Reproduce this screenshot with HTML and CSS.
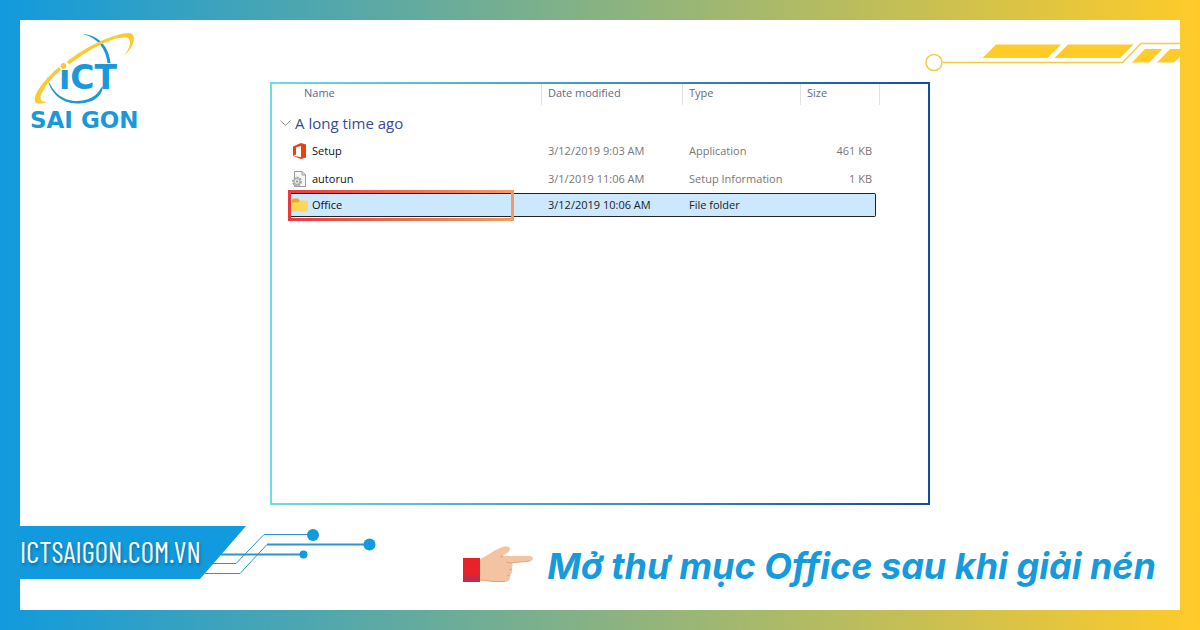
FILE: index.html
```html
<!DOCTYPE html>
<html lang="vi">
<head>
<meta charset="utf-8">
<meta name="viewport" content="width=device-width, initial-scale=1">
<title>ICT Sai Gon</title>
<link rel="stylesheet" href="styles.css">
</head>
<body>
<div class="frame">
  <div class="page">
    <svg class="logo" viewBox="28 30 116 102" role="img" aria-label="ICT Sai Gon">
      <path class="logo-blue" d="M83 34C99 35 109 47 110.500 63L107.500 63C106 49 98 38 83 34Z"/>
      <path class="logo-blue" d="M47 76C49 92 61 103.500 77 103.500C91 103.500 102 98 103 86L101 88C97 96 88 101 77 101C62 101 51 91 47 76Z"/>
      <path class="logo-gold" d="M67 61.500C88 45 116 33 129 33C138 34 134 47 124 56C130 48 133 39 126 37.500C113 36 88 50 69 64.500Z"/>
      <path class="logo-gold" d="M59 67C45 79 33 94 35 101C36 105 42 104 47 102C41 102 38 99 43 91C47 83 53 77 61 70Z"/>
      <text class="logo-ict" x="59" y="89">ıCT</text>
      <circle class="logo-gold" cx="63.500" cy="66" r="3.500" stroke="#fff"/>
      <text class="logo-city" x="30" y="128">SAI GON</text>
    </svg>

    <svg class="trace" viewBox="920 40 260 32" aria-hidden="true">
      <path class="trace-line" d="M943 62.500H1122.500L1141 43.500H1180"/>
      <circle class="trace-line" cx="934" cy="62.500" r="8"/>
      <path class="trace-fill" d="M982.500 58L996 44.500H1061L1047.500 58ZM1054.500 58L1068 44.500H1133.500L1120 58ZM1132 62.500L1145 49H1162.500L1149 62.500ZM1157 62.500L1170 49H1180V57L1174 62.500Z"/>
    </svg>

    <main class="window">
      <table class="files">
        <colgroup><col><col class="col-date"><col class="col-type"><col class="col-size"></colgroup>
        <thead>
          <tr><th class="name-head">Name</th><th>Date modified</th><th>Type</th><th class="size-head">Size</th></tr>
        </thead>
        <tbody>
          <tr class="group">
            <th colspan="4" scope="rowgroup">
              <div class="group-label">
                <svg class="chevron" viewBox="0 0 11 8" aria-hidden="true"><path d="M.5 1.500L5.500 6.500L10.500 1.500"/></svg>
                A long time ago
              </div>
            </th>
          </tr>
          <tr class="row">
            <td><div class="file">
              <svg class="icon" viewBox="0 0 16 16" aria-hidden="true"><path fill="#e8420c" fill-rule="evenodd" d="M1 3.500L9 0L14 1.500V14.500L9 16L1 13L9 14V3L4 4.200V11.500L1 13Z"/></svg>
              Setup</div></td>
            <td>3/12/2019 9:03 AM</td><td>Application</td><td class="size">461 KB</td>
          </tr>
          <tr class="row">
            <td><div class="file">
              <svg class="icon" viewBox="0 0 16 16" aria-hidden="true"><path fill="#f7f7f7" stroke="#999" d="M2.500 .5H10L13.500 4V15.500H2.500Z"/><path fill="none" stroke="#999" d="M10 .5V4H13.500"/><circle cx="5" cy="10.500" r="4" fill="#ddd" stroke="#a4a8ac" stroke-width="2" stroke-dasharray="2 1"/><circle cx="5" cy="10.500" r="3" fill="#e5e5e5" stroke="#a4a8ac"/><circle cx="5" cy="10.500" r="1" fill="#8a8f94"/></svg>
              autorun</div></td>
            <td>3/1/2019 11:06 AM</td><td>Setup Information</td><td class="size">1 KB</td>
          </tr>
          <tr class="row selected">
            <td class="marked"><div class="file">
              <svg class="icon" viewBox="0 0 16 16" aria-hidden="true"><path fill="#e8ac17" d="M0 3Q0 1.500 1.500 1.500H6L8 3.500V7H0Z"/><path fill="#ffd659" d="M0 5.500H6L8 3.500H14.500Q16 3.500 16 5V13Q16 14.500 14.500 14.500H1.500Q0 14.500 0 13Z"/></svg>
              Office</div></td>
            <td>3/12/2019 10:06 AM</td><td>File folder</td><td class="size"></td>
          </tr>
        </tbody>
      </table>
    </main>

    <footer class="footer">
      <div class="brand">
        <a class="site" href="#">ICTSAIGON.COM.VN</a>
        <svg class="circuit" viewBox="200 526 180 53" aria-hidden="true">
          <path class="wire" d="M213 563.500H236L264 534.500H308M205 573.500H240L267 544.500"/>
          <path class="wire-bold" d="M267 544.500H364M221 554.500H301"/>
          <circle cx="313" cy="535" r="6"/><circle cx="369.500" cy="544.500" r="6"/><circle cx="303.500" cy="554.500" r="4"/>
        </svg>
      </div>
      <div class="caption">
        <svg class="hand" viewBox="463 546 70 36" aria-hidden="true">
          <path fill="#f4c4a2" d="M480 559C489 555 494 550 500 548C505 546 510 546 510 549C510 552 506 553 503 556H529C534 556 534 561 530 561L512 563C513 566 512 567 512 569C513 572 511 574 510 575C511 580 508 582 505 582H495C490 582 486 580 480 580Z"/>
          <path fill="none" stroke="#dda47e" stroke-width="1" d="M530 561L510 563L506 562M512 569L509 570M510 575L507 576M503 556L500 557M480 580C486 580 490 581.500 495 581.500H505"/>
          <path fill="#e9212b" d="M463 558H480V575H463Z"/><path fill="#c62a45" d="M463 575H480V582H463Z"/>
        </svg>
        <h1 class="title">Mở thư mục Office sau khi giải nén</h1>
      </div>
    </footer>
  </div>
</div>
</body>
</html>
```
FILE: styles.css
```css
* { box-sizing: border-box; }

body {
  margin: 0;
  font-family: "Open Sans", "Noto Sans", sans-serif;
}

.frame {
  display: grid;
  min-height: 100vh;
  padding: 20px;
  background: linear-gradient(90deg, #119add, #ffcb29);
}

.page {
  display: grid;
  grid-template-columns: minmax(0, 25fr) minmax(0, 66fr) minmax(0, 25fr);
  grid-template-rows: 62px 1fr auto;
  background: #fff;
}

.logo {
  grid-column: 1;
  grid-row: 1 / 3;
  width: 116px;
  height: 102px;
  margin: 10px 0 0 8px;
}
.logo-blue { fill: #1b98d8; }
.logo-gold { fill: #fbc932; }
.logo-ict, .logo-city {
  fill: #1b98d8;
  font-family: "DejaVu Sans", sans-serif;
  font-weight: bold;
}
.logo-ict { font-size: 33px; }
.logo-city { font-size: 23px; }

.trace {
  grid-column: 2 / 4;
  grid-row: 1;
  justify-self: end;
  width: 260px;
  height: 32px;
  margin-top: 20px;
}
.trace-line { fill: none; stroke: #f5ca45; stroke-width: 1.5; }
.trace-fill { fill: #ffcb29; }

.window {
  grid-column: 2;
  grid-row: 2;
  padding: 0 52px 0 16px;
  border: 2px solid;
  border-image: linear-gradient(90deg, #6edde3, #134d9f) 1;
}

.files {
  width: 100%;
  table-layout: fixed;
  border-collapse: separate;
  border-spacing: 0;
  font-size: 11px;
  line-height: 16px;
  color: #777;
}
.col-date { width: 141px; }
.col-type { width: 118px; }
.col-size { width: 76px; }
.files th, .files td {
  padding: 0 0 0 7px;
  text-align: left;
  font-weight: normal;
  white-space: nowrap;
}
.files thead th {
  height: 21px;
  padding: 0 0 3px 6px;
  border-left: 1px solid #e2e2e2;
  color: #5d6b85;
}
.files thead .name-head { padding-left: 16px; border-left: 0; }
.size-head { position: relative; }
.size-head::after {
  content: "";
  position: absolute;
  top: 0;
  bottom: 0;
  right: -4px;
  border-right: 1px solid #e2e2e2;
}
.files .group th { height: 32px; padding: 0 0 0 1px; }
.group-label {
  display: flex;
  align-items: center;
  gap: 4px;
  margin-left: -9px;
  padding-top: 3px;
  font-size: 15px;
  line-height: 20px;
  color: #3b4a94;
}
.chevron { width: 11px; height: 8px; fill: none; stroke: #999; }
.row { height: 28px; }
.files .row td:first-child { padding-left: 4px; }
.files .row .size { padding-right: 4px; text-align: right; }
.file { display: flex; align-items: center; gap: 4px; color: #111; }
.icon { width: 16px; height: 16px; }

.files .selected { height: 24px; color: #222; }
.selected td {
  background: #cce8ff;
  border: solid #222;
  border-width: 1px 0;
}
.selected td:last-child { border-right-width: 1px; border-radius: 0 2px 2px 0; }
.marked { position: relative; }
.marked::after {
  content: "";
  position: absolute;
  inset: -4px 27px -5px 0;
  border: 3px solid;
  border-image: linear-gradient(90deg, #e43b40, #f39a62) 1;
}

.footer {
  grid-column: 1 / 4;
  grid-row: 3;
  display: flex;
  justify-content: space-between;
  align-items: flex-start;
  min-height: 105px;
  padding: 21px 24px 0 0;
}
.brand { display: flex; }
.site {
  width: 226px;
  height: 53px;
  background: #119add;
  clip-path: polygon(0 0, 100% 0, 180px 100%, 0 100%);
  color: #fff;
  font-family: "Barlow Condensed", "Roboto Condensed", "Open Sans Condensed", "Liberation Sans Narrow", sans-serif;
  font-size: 29px;
  line-height: 51px;
  text-decoration: none;
  text-shadow: 1px 2px 3px #0b6b9b;
}
.circuit { width: 180px; height: 53px; margin-left: -46px; fill: #119add; }
.wire, .wire-bold { fill: none; stroke: #2b94cf; }
.wire-bold { stroke-width: 2; }

.caption { display: flex; align-items: flex-start; gap: 14px; padding-top: 20px; }
.hand { width: 70px; height: 36px; }
.title {
  margin: 0;
  color: #159adb;
  font-family: Inter, sans-serif;
  font-size: 36px;
  font-style: italic;
  font-weight: 700;
  line-height: 40px;
  white-space: nowrap;
}
```
